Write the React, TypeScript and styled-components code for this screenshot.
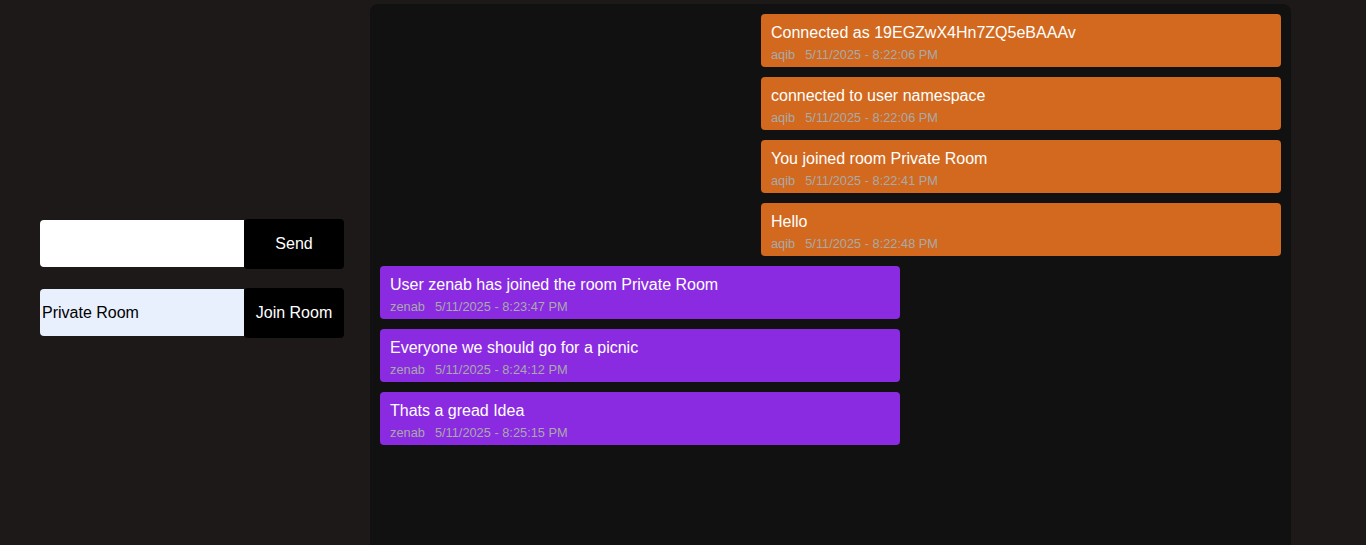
import React from "react";
import styled, { createGlobalStyle } from "styled-components";

const GlobalStyle = createGlobalStyle`
  html {
    overflow-y: scroll;
  }
  html::-webkit-scrollbar {
    width: 15px;
    background-color: #fff;
  }
  html::-webkit-scrollbar-thumb {
    background-color: #909090;
    border: 3px solid #fff;
    border-radius: 8px;
  }
  html, body {
    margin: 0;
    padding: 0;
    background-color: #1e1919;
    font-family: "Liberation Sans", Arial, sans-serif;
  }
`;

const Page = styled.div`
  display: flex;
  align-items: stretch;
`;

const Sidebar = styled.div`
  display: flex;
  flex-direction: column;
  justify-content: center;
  gap: 19px;
  padding-left: 40px;
  width: 304px;
  flex-shrink: 0;
`;

const FormRow = styled.form`
  display: flex;
  align-items: center;
`;

const TextInput = styled.input<{ $filled?: boolean }>`
  width: 204px;
  height: 47px;
  box-sizing: border-box;
  border: none;
  outline: none;
  border-radius: 4px 0 0 4px;
  padding: 1px 2px;
  font-family: "Liberation Sans", Arial, sans-serif;
  font-size: 16px;
  color: #000;
  background-color: ${(p) => (p.$filled ? "#e8f0fe" : "#fff")};
`;

const ActionButton = styled.button`
  width: 100px;
  height: 50px;
  border: none;
  border-radius: 4px;
  background-color: #000;
  color: #fff;
  font-family: "Liberation Sans", Arial, sans-serif;
  font-size: 16px;
  cursor: pointer;
`;

const ChatPanel = styled.div`
  margin: 4px 0 0 26px;
  width: 921px;
  height: 552px;
  box-sizing: border-box;
  padding: 10px;
  background-color: #111111;
  border-radius: 8px;
  display: flex;
  flex-direction: column;
  gap: 10px;
`;

const Bubble = styled.div<{ $mine: boolean }>`
  width: 520px;
  box-sizing: border-box;
  padding: 10px 10px 4px;
  border-radius: 4px;
  align-self: ${(p) => (p.$mine ? "flex-end" : "flex-start")};
  background-color: ${(p) => (p.$mine ? "#d2691e" : "#8a2be2")};
`;

const BubbleText = styled.div`
  color: #fff;
  font-size: 16px;
  line-height: 18px;
`;

const Meta = styled.div`
  margin-top: 5px;
  font-size: 12.8px;
  line-height: 16px;
  color: #a9a9a9;
  display: flex;
  gap: 10px;
`;

type Message = { text: string; user: string; time: string; mine: boolean };

const messages: Message[] = [
  { text: "Connected as 19EGZwX4Hn7ZQ5eBAAAv", user: "aqib", time: "5/11/2025 - 8:22:06 PM", mine: true },
  { text: "connected to user namespace", user: "aqib", time: "5/11/2025 - 8:22:06 PM", mine: true },
  { text: "You joined room Private Room", user: "aqib", time: "5/11/2025 - 8:22:41 PM", mine: true },
  { text: "Hello", user: "aqib", time: "5/11/2025 - 8:22:48 PM", mine: true },
  { text: "User zenab has joined the room Private Room", user: "zenab", time: "5/11/2025 - 8:23:47 PM", mine: false },
  { text: "Everyone we should go for a picnic", user: "zenab", time: "5/11/2025 - 8:24:12 PM", mine: false },
  { text: "Thats a gread Idea", user: "zenab", time: "5/11/2025 - 8:25:15 PM", mine: false },
];

export default function App() {
  return (
    <>
      <GlobalStyle />
      <Page>
        <Sidebar>
          <FormRow onSubmit={(e) => e.preventDefault()}>
            <TextInput type="text" />
            <ActionButton type="submit">Send</ActionButton>
          </FormRow>
          <FormRow onSubmit={(e) => e.preventDefault()}>
            <TextInput type="text" $filled defaultValue="Private Room" />
            <ActionButton type="submit">Join Room</ActionButton>
          </FormRow>
        </Sidebar>
        <ChatPanel>
          {messages.map((m, i) => (
            <Bubble key={i} $mine={m.mine}>
              <BubbleText>{m.text}</BubbleText>
              <Meta>
                <span>{m.user}</span>
                <span>{m.time}</span>
              </Meta>
            </Bubble>
          ))}
        </ChatPanel>
      </Page>
    </>
  );
}
